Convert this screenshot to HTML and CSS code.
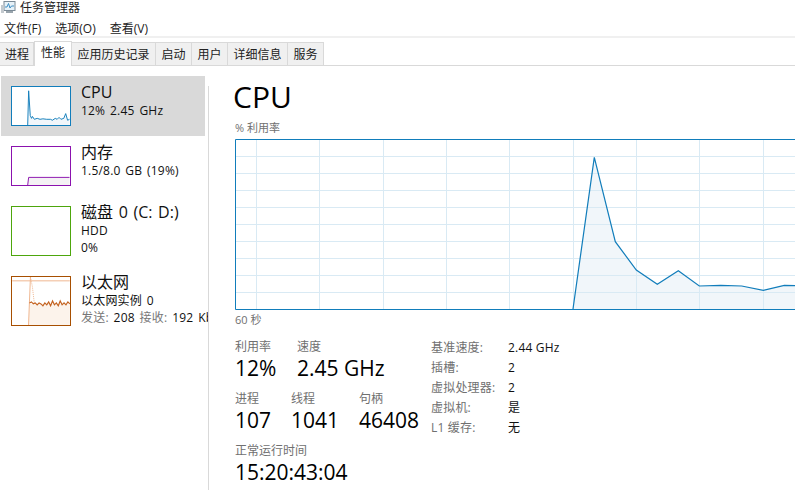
FILE: index.html
```html
<!DOCTYPE html>
<html lang="zh-CN">
<head>
  <meta charset="UTF-8">
  <meta name="viewport" content="width=device-width, initial-scale=1.0">
  <title>任务管理器</title>
  <link rel="stylesheet" href="styles.css">
</head>
<body>
  <div class="titlebar">
    <svg class="app-icon" width="15" height="15" viewBox="0 0 15 15">
      <rect x="3" y="1.5" width="11" height="9" fill="#e6f1f8" stroke="#7b8a96"/>
      <polyline points="4,7 6,7 7.5,3.5 9,8 10.5,6 13,6" fill="none" stroke="#3f8fc4"/>
      <rect x="5" y="11" width="7" height="2" fill="#9aa5ad"/>
      <rect x="0" y="5" width="3" height="8" fill="#c3c9ce"/>
    </svg>
    <span>任务管理器</span>
  </div>
  <div class="menubar">
    <span>文件(F)</span>
    <span>选项(O)</span>
    <span>查看(V)</span>
  </div>
  <div class="tabs">
    <div class="tab">进程</div>
    <div class="tab active">性能</div>
    <div class="tab">应用历史记录</div>
    <div class="tab">启动</div>
    <div class="tab">用户</div>
    <div class="tab">详细信息</div>
    <div class="tab">服务</div>
  </div>

  <div class="content">
    <div class="sidebar">
      <div class="item selected">
        <svg class="thumb cpu" viewBox="0 0 60 40">
          <polygon class="fill" points="16,40 17,4 18.7,30 20,33 21,31 23,34 26,33 29,34 32,33.5 36,34 40,34 42,35 45,33 47,34 49,32 51,34 54,33 56,28 58,35 60,34 60,40"/>
          <polyline class="line" points="16,40 17,4 18.7,30 20,33 21,31 23,34 26,33 29,34 32,33.5 36,34 40,34 42,35 45,33 47,34 49,32 51,34 54,33 56,28 58,35 60,34"/>
        </svg>
        <div class="info">
          <div class="name">CPU</div>
          <div class="sub">12% 2.45 GHz</div>
        </div>
      </div>
      <div class="item">
        <svg class="thumb mem" viewBox="0 0 60 40">
          <polygon class="fill" points="16,40 17,32 60,32 60,40"/>
          <polyline class="line" points="16,40 17,32 60,32"/>
        </svg>
        <div class="info">
          <div class="name">内存</div>
          <div class="sub">1.5/8.0 GB (19%)</div>
        </div>
      </div>
      <div class="item tall">
        <svg class="thumb disk" viewBox="0 0 60 50"></svg>
        <div class="info">
          <div class="name">磁盘 0 (C: D:)</div>
          <div class="sub">HDD</div>
          <div class="sub">0%</div>
        </div>
      </div>
      <div class="item tall">
        <svg class="thumb net" viewBox="0 0 60 50">
          <line class="limit" x1="0" y1="4" x2="60" y2="4"/>
          <polygon class="fill" points="17,50 18,28 60,28 60,50"/>
          <polyline class="peak" points="19,0 21,10 23,27"/>
          <line class="rise" x1="17" y1="50" x2="19" y2="0"/>
          <polyline class="line" points="18,27 20,26 22,28 24,27 26,29 28,27 30,28 32,30 34,27 36,29 38,26 40,30 42,25 44,29 46,27 48,30 50,25 52,29 54,27 56,29 58,26 60,28"/>
        </svg>
        <div class="info">
          <div class="name">以太网</div>
          <div class="sub">以太网实例 0</div>
          <div class="sub"><span class="dim">发送:</span> 208 <span class="dim">接收:</span> 192 Kbps</div>
        </div>
      </div>
    </div>

    <div class="divider"></div>

    <div class="main">
      <h1>CPU</h1>
      <div class="caption">% 利用率</div>
      <svg class="chart" width="560" height="171" viewBox="235 139 560 171">
        <polygon class="area" points="573,309 594.3,157.3 615.3,241.7 636.3,270 657.3,284.3 678.3,270.7 699.3,286 720.7,285.3 741.7,286 763.3,290.3 784.3,285.3 795,285.7 795,309"/>
        <g class="grid">
          <path d="M235 156.5H795M235 173.5H795M235 190.5H795M235 207.5H795M235 224.5H795M235 241.5H795M235 258.5H795M235 275.5H795M235 292.5H795"/>
          <path d="M256.5 139V309M319.5 139V309M383.5 139V309M446.5 139V309M509.5 139V309M573.5 139V309M636.5 139V309M699.5 139V309M763.5 139V309"/>
        </g>
        <polyline class="plot" points="573,309 594.3,157.3 615.3,241.7 636.3,270 657.3,284.3 678.3,270.7 699.3,286 720.7,285.3 741.7,286 763.3,290.3 784.3,285.3 795,285.7"/>
        <path class="frame" d="M795 139.5H235.5V309.5H795"/>
      </svg>
      <div class="caption under">60 秒</div>

      <div class="stats">
        <div class="stats-left">
          <div class="stat-row">
            <div class="stat w62"><div class="label">利用率</div><div class="value">12%</div></div>
            <div class="stat"><div class="label">速度</div><div class="value">2.45 GHz</div></div>
          </div>
          <div class="stat-row">
            <div class="stat w56"><div class="label">进程</div><div class="value">107</div></div>
            <div class="stat w68"><div class="label">线程</div><div class="value">1041</div></div>
            <div class="stat"><div class="label">句柄</div><div class="value">46408</div></div>
          </div>
          <div class="stat-row">
            <div class="stat"><div class="label">正常运行时间</div><div class="value">15:20:43:04</div></div>
          </div>
        </div>
        <div class="stats-right">
          <div class="label">基准速度:</div><div>2.44 GHz</div>
          <div class="label">插槽:</div><div>2</div>
          <div class="label">虚拟处理器:</div><div>2</div>
          <div class="label">虚拟机:</div><div>是</div>
          <div class="label">L1 缓存:</div><div>无</div>
        </div>
      </div>
    </div>
  </div>
</body>
</html>
```

FILE: styles.css
```css
/* 任务管理器 - 性能页 */
body {
  margin: 0;
  height: 490px;
  overflow: hidden;
  background-color: #fff;
  color: #111;
  font-family: "Open Sans", "Noto Sans CJK SC", sans-serif;
  font-size: 12px;
  display: flex;
  flex-direction: column;
}
.titlebar {
  height: 18px;
  box-sizing: border-box;
  padding-bottom: 2px;
  display: flex;
  align-items: center;
  gap: 4px;
  line-height: 16px;
  color: #222;
}
.app-icon {
  margin-left: 1px;
  margin-top: -1px;
}
.menubar {
  height: 20px;
  box-sizing: border-box;
  padding: 1px 0 0 4px;
  display: flex;
  align-items: center;
  gap: 14px;
  border-bottom: 2px solid #f0f0f0;
  color: #222;
}
.tabs {
  height: 24px;
  margin-top: 3px;
  display: flex;
  align-items: flex-end;
  border-bottom: 1px solid #d9d9d9;
}
.tab {
  height: 22px;
  line-height: 24px;
  padding: 0 5.5px;
  background-color: #f0f0f0;
  border-top: 1px solid #d9d9d9;
  border-right: 1px solid #d9d9d9;
  white-space: nowrap;
  color: #222;
}
.tab:first-child {
  padding: 0 4px 0 5px;
}
.tab.active {
  height: 24px;
  line-height: 22px;
  padding: 0 6px;
  background-color: #fff;
  border-left: 1px solid #d9d9d9;
  margin-bottom: -1px;
  position: relative;
}
.content {
  flex: 1;
  display: flex;
  min-height: 0;
}
.sidebar {
  width: 208px;
  padding-top: 10px;
  overflow: hidden;
  flex-shrink: 0;
}
.item {
  width: 204px;
  height: 60px;
  margin-left: 1px;
  padding: 6px 10px 0;
  box-sizing: border-box;
  display: flex;
  gap: 10px;
}
.item.tall {
  height: 70px;
}
.item.selected {
  background-color: #d9d9d9;
}
.thumb {
  width: 60px;
  height: 40px;
  margin-top: 4px;
  flex-shrink: 0;
  box-sizing: border-box;
  background-color: #fff;
  border: 1px solid;
}
.thumb.disk, .thumb.net {
  height: 50px;
}
.thumb .line {
  fill: none;
  stroke-width: 1;
}
.cpu { border-color: #117dbb; }
.cpu .line { stroke: #117dbb; }
.cpu .fill { fill: #f1f6fa; }
.mem { border-color: #8b12ae; }
.mem .line { stroke: #8b12ae; }
.mem .fill { fill: #f4f2f4; }
.disk { border-color: #4da60c; }
.net { border-color: #a74f01; }
.net .line { stroke: #c4621f; stroke-width: 1.2; }
.net .fill { fill: #fcf3eb; }
.net .limit, .net .rise { stroke: #eeb48c; }
.net .peak {
  fill: none;
  stroke: #eeb48c;
  stroke-dasharray: 1 1;
}
.info {
  min-width: 0;
}
.name {
  font-size: 16px;
  line-height: 20px;
  word-spacing: 1.5px;
  white-space: nowrap;
}
.sub {
  line-height: 17px;
  letter-spacing: 0.2px;
  word-spacing: 1.5px;
  white-space: nowrap;
}
.dim {
  color: #777;
}
.divider {
  width: 1px;
  margin-top: 20px;
  background-color: #d9d9d9;
  flex-shrink: 0;
}
.main {
  flex: 1;
  padding: 11px 0 0 26px;
  min-width: 0;
}
h1 {
  margin: 0 0 0 -2px;
  font-size: 30px;
  font-weight: 400;
  line-height: 40px;
  color: #000;
}
.caption {
  font-size: 11px;
  line-height: 16px;
  margin-top: 3px;
  color: #707070;
}
.caption.under {
  margin-top: 2px;
}
.chart {
  display: block;
  margin-top: 3px;
}
.grid path {
  fill: none;
  stroke: #d9eaf4;
}
.area {
  fill: #f1f6fa;
}
.plot {
  fill: none;
  stroke: #117dbb;
  stroke-width: 1.2;
}
.frame {
  fill: none;
  stroke: #117dbb;
}
.stats {
  margin-top: 11px;
  display: flex;
}
.stats-left {
  width: 196px;
  flex-shrink: 0;
}
.stat-row {
  height: 52px;
  display: flex;
}
.w62 { width: 62px; }
.w56 { width: 56px; }
.w68 { width: 68px; }
.label {
  color: #707070;
  line-height: 16px;
}
.value {
  font-size: 21px;
  line-height: 27px;
  color: #000;
  white-space: nowrap;
}
.stats-right {
  padding-top: 1px;
  display: grid;
  grid-template-columns: 77px auto;
  grid-auto-rows: 20px;
  align-content: start;
  line-height: 16px;
  letter-spacing: 0.2px;
}
```
